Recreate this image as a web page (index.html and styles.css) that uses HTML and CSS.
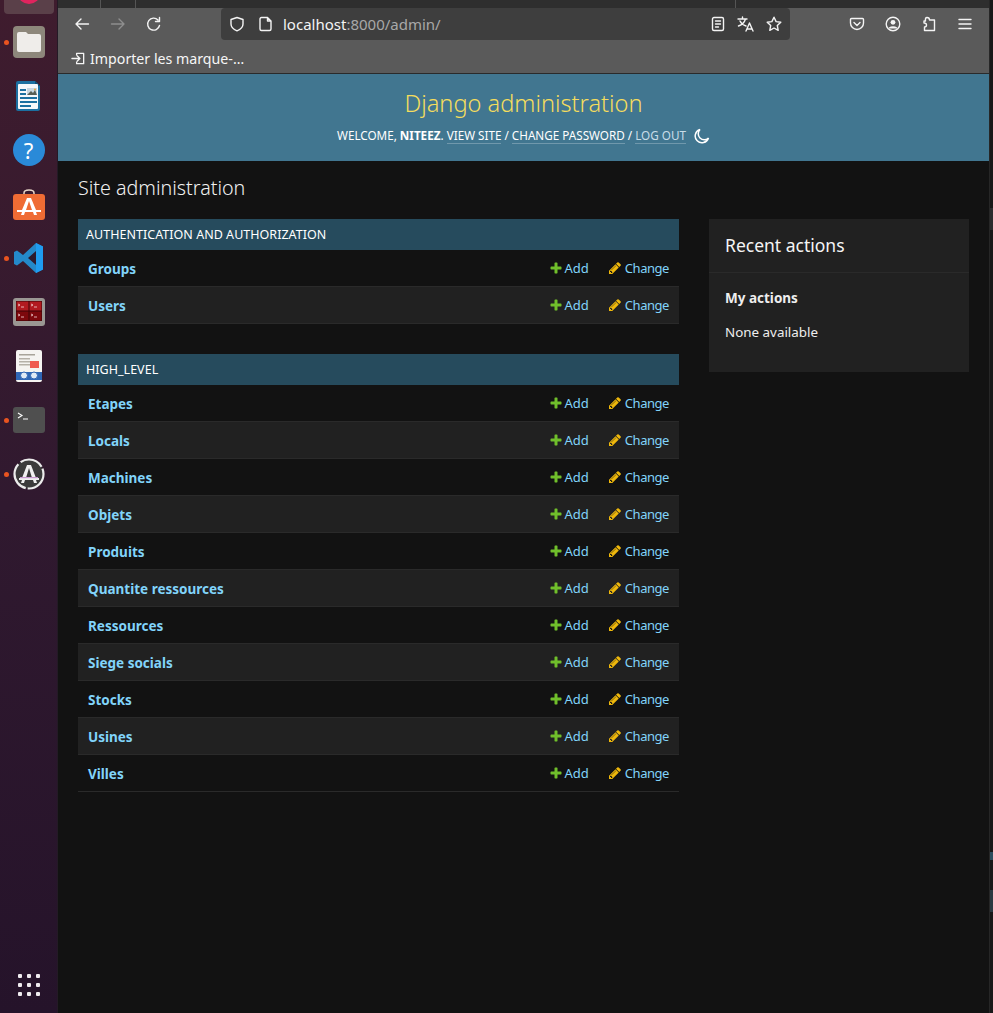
FILE: index.html
```html
<!DOCTYPE html>
<html lang="en">
<head>
<meta charset="utf-8">
<title>Site administration | Django site admin</title>
<link rel="stylesheet" href="styles.css">
</head>
<body>
<svg class="defs" width="0" height="0" aria-hidden="true">
  <symbol id="i-add" viewBox="0 0 1792 1792"><path fill="#70bf2b" d="M1600 796v192q0 40-28 68t-68 28h-416v416q0 40-28 68t-68 28h-192q-40 0-68-28t-28-68v-416h-416q-40 0-68-28t-28-68v-192q0-40 28-68t68-28h416v-416q0-40 28-68t68-28h192q40 0 68 28t28 68v416h416q40 0 68 28t28 68z"/></symbol>
  <symbol id="i-change" viewBox="0 0 1792 1792"><path fill="#efb80b" d="M491 1536l91-91-235-235-91 91v107h128v128h107zm523-928q0-22-22-22-10 0-17 7l-542 542q-7 7-7 17 0 22 22 22 10 0 17-7l542-542q7-7 7-17zm-54-192l416 416-832 832h-416v-416zm683 96q0 53-37 90l-166 166-416-416 166-165q36-38 90-38 53 0 91 38l235 234q37 39 37 91z"/></symbol>
</svg>
<div class="desktop">
  <nav class="dock">
    <div class="dock-active"><span class="dock-pink"></span></div>
    <div class="dock-apps">
      <div class="dock-item running">
        <svg viewBox="0 0 32 32" width="32" height="32"><rect width="32" height="32" rx="4" fill="#8d877b"/><path d="M4 8q0-2 2-2h7l2 2h11q2 0 2 2v14q0 2-2 2H6q-2 0-2-2z" fill="#efedea"/></svg>
      </div>
      <div class="dock-item">
        <svg viewBox="0 0 32 32" width="32" height="32"><path d="M5 1h17l5 5v23q0 2-2 2H5q-2 0-2-2V3q0-2 2-2z" fill="#1b6fa0"/><path d="M22 1l5 5h-5z" fill="#0d4d74"/><rect x="5" y="4" width="20" height="25" rx="1" fill="#f4f7fa"/><rect x="7" y="9" width="6" height="2" fill="#1b6fa0"/><rect x="7" y="13" width="6" height="2" fill="#1b6fa0"/><rect x="7" y="17" width="17" height="2" fill="#1b6fa0"/><rect x="7" y="21" width="17" height="2" fill="#1b6fa0"/><rect x="7" y="25" width="11" height="2" fill="#1b6fa0"/><rect x="14" y="8" width="10" height="7" fill="#c7d6e0"/><path d="M14 15l4-4 2 2 2-3 2 5z" fill="#565d55"/><circle cx="22" cy="9.500" r="1" fill="#e2a33a"/></svg>
      </div>
      <div class="dock-item">
        <span class="dock-help">?</span>
      </div>
      <div class="dock-item">
        <svg viewBox="0 0 32 32" width="32" height="32"><path d="M11 7V5q0-3 5-3t5 3v2" fill="none" stroke="#e8d6c8" stroke-width="1.500"/><rect y="6" width="32" height="26" rx="3" fill="#ef6c34"/><path d="M14 10h4l5 12h5v2h-5l1 3h-3l-1-3h-8l-1 3H8l1-3H4v-2h5zM16 13l-3 9h6z" fill="#fff"/></svg>
      </div>
      <div class="dock-item running">
        <svg viewBox="0 0 32 32" width="32" height="32"><path d="M23 1l7 3.500v23L23 31 10 19l-6 4.500-3-1.500v-12l3-1.500 6 4.500z" fill="#2489ca"/><path d="M23 1l7 3.500v23L23 31z" fill="#1f9cf0"/><path d="M23 9l-8 7 8 7z" fill="#2c1a2e"/></svg>
      </div>
      <div class="dock-item">
        <svg viewBox="0 0 32 28" width="32" height="28"><rect width="32" height="28" rx="3" fill="#9a9793"/><rect x="3" y="3" width="26" height="20" fill="#3a0507"/><rect x="3.500" y="3.500" width="12" height="9" fill="#b21a20"/><rect x="16.500" y="3.500" width="12" height="9" fill="#b21a20"/><rect x="3.500" y="13.500" width="12" height="9" fill="#7d080c"/><rect x="16.500" y="13.500" width="12" height="9" fill="#7d080c"/><path d="M5 6l2 1-2 1M8 9h3M18 6l2 1-2 1M21 9h3M5 16l2 1-2 1M8 19h3M18 16l2 1-2 1M21 19h3" stroke="#f3d6d6" fill="none" stroke-width=".8"/></svg>
      </div>
      <div class="dock-item">
        <svg viewBox="0 0 26 32" width="26" height="32"><rect width="26" height="32" rx="2" fill="#f5f4f1"/><rect x="3" y="4" width="16" height="1.500" fill="#a8a49a"/><rect x="3" y="8" width="11" height="1.500" fill="#b5b1a8"/><rect x="3" y="11" width="11" height="1.500" fill="#b5b1a8"/><rect x="3" y="14" width="11" height="1.500" fill="#b5b1a8"/><rect x="14" y="11" width="9" height="7" fill="#ef5a50"/><rect y="22" width="26" height="8" fill="#2f66b5"/><circle cx="8" cy="25.500" r="3.500" fill="#dfe9f5" stroke="#2f66b5"/><circle cx="18" cy="25.500" r="3.500" fill="#dfe9f5" stroke="#2f66b5"/></svg>
      </div>
      <div class="dock-item running">
        <svg viewBox="0 0 32 26" width="32" height="26"><rect width="32" height="26" rx="3" fill="#4f4f4f"/><path d="M5 6l4 2.500-4 2.500M10 12h5" fill="none" stroke="#fff" stroke-width="1.100"/></svg>
      </div>
      <div class="dock-item running">
        <svg viewBox="0 0 32 32" width="32" height="32"><circle cx="16" cy="16" r="14.500" fill="#3b3b3b" stroke="#ececec" stroke-width="2.200" stroke-dasharray="24 2 30 3"/><path d="M14 7h4l5 13h3v2h-3l1 3h-3l-1-3h-8l-1 3H8l1-3H6v-2h3zM16 10l-3 10h6z" fill="#f0f0f0"/><rect x="7" y="19" width="18" height="1.200" fill="#c89ad0"/></svg>
      </div>
    </div>
    <div class="dock-grid">
      <i></i><i></i><i></i><i></i><i></i><i></i><i></i><i></i><i></i>
    </div>
  </nav>

  <div class="browser">
    <div class="tabstrip"><span class="tab-sep"></span><span class="tab-sep"></span><span class="tab-fill"></span><span class="tab-sep"></span></div>
    <div class="navbar">
      <div class="nav-buttons">
        <svg class="tb" viewBox="0 0 16 16"><path d="M14.500 8H2M7 3L2 8l5 5"/></svg>
        <svg class="tb dim" viewBox="0 0 16 16"><path d="M1.500 8H14M9 3l5 5-5 5"/></svg>
        <svg class="tb" viewBox="0 0 16 16"><path d="M13.500 9.500A6 6 0 1 1 12 4M13.500 1.500V5.500H9.500"/></svg>
      </div>
      <div class="urlbar">
        <svg class="tb" viewBox="0 0 16 16"><path d="M8 1.500l6 2v4.500q0 4.500-6 6.800Q2 12.500 2 8V3.500z"/></svg>
        <svg class="tb page" viewBox="0 0 16 16"><path d="M3.500 1.500h6l3.500 3.500v8q0 1.500-1.500 1.500h-8q-1.500 0-1.500-1.500v-10q0-1.500 1.500-1.500zM9.500 1.500V5h3.500"/></svg>
        <span class="url">localhost<span class="url-dim">:8000/admin/</span></span>
        <span class="url-actions">
          <svg class="tb" viewBox="0 0 16 16"><rect x="2.500" y="1.500" width="11" height="13" rx="1.500"/><path d="M5.500 5h5M5.500 8h5M5.500 11h3"/></svg>
          <svg class="tb tb-wide" viewBox="0 0 18 16"><path d="M1 3h9M5.500 1v2M8.500 3Q7 8 1.500 10M3 5q2 4 6 5M9 15l3.500-8 3.500 8M10 13h5"/></svg>
          <svg class="tb" viewBox="0 0 16 16"><path d="M8 1.200l2.100 4.400 4.700.6-3.500 3.300.9 4.800L8 12l-4.200 2.300.9-4.800L1.200 6.200l4.700-.6z"/></svg>
        </span>
      </div>
      <div class="nav-tools">
        <svg class="tb" viewBox="0 0 16 16"><path d="M2.500 2.500h11q1 0 1 1V7a6.500 6.500 0 0 1-13 0V3.500q0-1 1-1zM5 6.500l3 3 3-3"/></svg>
        <svg class="tb" viewBox="0 0 16 16"><circle cx="8" cy="8" r="6.800"/><circle cx="8" cy="6.300" r="2.400" class="tb-fill"/><path class="tb-fill" d="M3.800 11.500q4.200-2.600 8.400 0v1H3.800z"/></svg>
        <svg class="tb" viewBox="0 0 16 16"><path d="M6 1.500q2.500 0 2.500 2.500h5v10.500H3.500v-3.500Q5.500 11 5.500 9T3 7V5h1.500Q4 1.500 6 1.500z"/></svg>
        <svg class="tb" viewBox="0 0 16 16"><path d="M2 3.500h12M2 8h12M2 12.500h12"/></svg>
      </div>
    </div>
    <div class="bookmarks">
      <svg class="tb import" viewBox="0 0 16 16"><path d="M6 4V2.500h7.500v11H6V12M1 8h8M6.500 5l3 3-3 3"/></svg>
      <span>Importer les marque-…</span>
    </div>

    <header class="site-header">
      <h1 class="branding">Django administration</h1>
      <div class="user-tools">WELCOME, <strong>NITEEZ</strong>. <a class="ul">VIEW SITE</a> / <a class="ul">CHANGE PASSWORD</a> / <a class="ul dim-link">LOG OUT</a><svg class="moon" viewBox="0 0 16 16"><path d="M6 1.500A6.800 6.800 0 1 0 14.500 10 6 6 0 0 1 6 1.500z"/></svg></div>
    </header>

    <main class="content">
      <h1 class="page-title">Site administration</h1>
      <div class="columns">
        <div class="apps">
          <section class="module">
            <h2 class="caption">AUTHENTICATION AND AUTHORIZATION</h2>
            <div class="row"><a class="model">Groups</a><a class="act add"><svg><use href="#i-add"/></svg>Add</a><a class="act change"><svg><use href="#i-change"/></svg>Change</a></div>
            <div class="row alt"><a class="model">Users</a><a class="act add"><svg><use href="#i-add"/></svg>Add</a><a class="act change"><svg><use href="#i-change"/></svg>Change</a></div>
          </section>
          <section class="module">
            <h2 class="caption">HIGH_LEVEL</h2>
            <div class="row"><a class="model">Etapes</a><a class="act add"><svg><use href="#i-add"/></svg>Add</a><a class="act change"><svg><use href="#i-change"/></svg>Change</a></div>
            <div class="row alt"><a class="model">Locals</a><a class="act add"><svg><use href="#i-add"/></svg>Add</a><a class="act change"><svg><use href="#i-change"/></svg>Change</a></div>
            <div class="row"><a class="model">Machines</a><a class="act add"><svg><use href="#i-add"/></svg>Add</a><a class="act change"><svg><use href="#i-change"/></svg>Change</a></div>
            <div class="row alt"><a class="model">Objets</a><a class="act add"><svg><use href="#i-add"/></svg>Add</a><a class="act change"><svg><use href="#i-change"/></svg>Change</a></div>
            <div class="row"><a class="model">Produits</a><a class="act add"><svg><use href="#i-add"/></svg>Add</a><a class="act change"><svg><use href="#i-change"/></svg>Change</a></div>
            <div class="row alt"><a class="model">Quantite ressources</a><a class="act add"><svg><use href="#i-add"/></svg>Add</a><a class="act change"><svg><use href="#i-change"/></svg>Change</a></div>
            <div class="row"><a class="model">Ressources</a><a class="act add"><svg><use href="#i-add"/></svg>Add</a><a class="act change"><svg><use href="#i-change"/></svg>Change</a></div>
            <div class="row alt"><a class="model">Siege socials</a><a class="act add"><svg><use href="#i-add"/></svg>Add</a><a class="act change"><svg><use href="#i-change"/></svg>Change</a></div>
            <div class="row"><a class="model">Stocks</a><a class="act add"><svg><use href="#i-add"/></svg>Add</a><a class="act change"><svg><use href="#i-change"/></svg>Change</a></div>
            <div class="row alt"><a class="model">Usines</a><a class="act add"><svg><use href="#i-add"/></svg>Add</a><a class="act change"><svg><use href="#i-change"/></svg>Change</a></div>
            <div class="row"><a class="model">Villes</a><a class="act add"><svg><use href="#i-add"/></svg>Add</a><a class="act change"><svg><use href="#i-change"/></svg>Change</a></div>
          </section>
        </div>
        <aside class="recent">
          <h2 class="recent-title">Recent actions</h2>
          <div class="recent-body">
            <h3 class="recent-sub">My actions</h3>
            <p class="recent-none">None available</p>
          </div>
        </aside>
      </div>
    </main>
  </div>
  <div class="edge">
    <span class="edge-block"></span>
    <span class="edge-mark"></span>
    <span class="edge-box"></span>
  </div>
</div>
</body>
</html>
```

FILE: styles.css
```css
* { box-sizing: border-box; }
html, body { margin: 0; padding: 0; height: 100%; background: #121212; }
body { font-family: "Noto Sans", "Open Sans", sans-serif; overflow: hidden; }
.defs { position: absolute; }
h1, h2, h3, p { margin: 0; font-weight: normal; }
a { text-decoration: none; }

.desktop { display: flex; width: 993px; height: 1013px; overflow: hidden; }

/* Dock */
.dock {
  width: 58px; flex: none; display: flex; flex-direction: column; align-items: center;
  background: linear-gradient(180deg, #3f1c2e 0%, #30192f 50%, #25132a 100%);
  border-right: 1px solid #241a26;
}
.dock-active { width: 50px; height: 14px; margin-left: 1px; background: #5a4049; border-radius: 0 0 4px 4px; display: flex; justify-content: center; overflow: hidden; }
.dock-pink { width: 22px; height: 20px; margin-top: -16px; border-radius: 50%; background: #e0245e; }
.dock-apps { display: flex; flex-direction: column; margin-top: 1px; }
.dock-item { height: 54px; width: 58px; display: flex; align-items: center; justify-content: center; position: relative; }
.dock-item svg { display: block; }
.running::before { content: ""; position: absolute; left: 4px; top: 25px; width: 5px; height: 5px; border-radius: 50%; background: #e95420; }
.dock-help { width: 32px; height: 32px; border-radius: 50%; background: #2a8ad8; color: #fff; font-size: 22px; line-height: 32px; text-align: center; }
.dock-grid { margin-top: auto; margin-bottom: 17px; display: grid; grid-template-columns: repeat(3, 4px); gap: 5px; }
.dock-grid i { width: 4px; height: 4px; background: #f0ecf0; border-radius: 1px; }

/* Browser chrome */
.browser { flex: 1; min-width: 0; display: flex; flex-direction: column; background: #121212; }
.tabstrip { height: 8px; background: #2e2e2e; display: flex; padding-left: 42px; gap: 34px; flex: none; }
.tab-sep { width: 1px; background: #555; }
.tab-fill { width: 531px; }
.navbar { height: 32px; background: #5a5a5a; display: flex; align-items: center; flex: none; }
.tb { width: 16px; height: 16px; fill: none; stroke: #f4f4f4; stroke-width: 1.400; stroke-linecap: round; stroke-linejoin: round; flex: none; }
.tb.dim { stroke: #8e8e8e; }
.tb-wide { width: 18px; }
.tb-fill { fill: #f4f4f4; stroke: none; }
.nav-buttons { width: 163px; display: flex; gap: 20px; padding-left: 16px; }
.urlbar { width: 569px; height: 32px; background: #3e3e3e; border-radius: 4px; display: flex; align-items: center; padding: 0 8px; color: #f4f4f4; }
.urlbar .page { margin-left: 13px; }
.url { margin-left: 9px; font-size: 15px; }
.url-dim { color: #a8a8a8; }
.url-actions { margin-left: auto; display: flex; gap: 11px; }
.nav-tools { display: flex; gap: 20px; padding-left: 59px; }
.bookmarks { height: 34px; background: #5a5a5a; border-bottom: 1px solid #2a2a2a; display: flex; align-items: center; gap: 4px; padding: 3px 0 0 13px; color: #f6f6f6; font-size: 14.200px; flex: none; }
.import { width: 15px; height: 15px; }

/* Django header */
.site-header { height: 87px; background: #417690; text-align: center; flex: none; padding-top: 13px; }
.branding { font-size: 23.600px; line-height: 32px; color: #f5dd5d; font-weight: 300; }
.user-tools { margin-top: 8px; font-size: 11.700px; line-height: 17px; color: #fff; white-space: pre; }
.user-tools strong { font-weight: 700; }
.ul { color: #fff; border-bottom: 1px solid rgba(255,255,255,.25); }
.dim-link { color: #c8dde8; }
.moon { width: 16px; height: 16px; margin-left: 8px; vertical-align: -4px; fill: none; stroke: #fff; stroke-width: 1.500; }

/* Content */
.content { flex: 1; padding: 14px 20px 0; background: #121212; color: #eee; }
.page-title { font-size: 19.700px; line-height: 26px; color: #f0f0f0; font-weight: 300; }
.columns { display: flex; gap: 30px; margin-top: 18px; }
.apps { width: 601px; flex: none; display: flex; flex-direction: column; gap: 30px; }
.caption { height: 31px; background: #264b5d; color: #fff; font-size: 12.500px; line-height: 31px; padding-left: 8px; letter-spacing: .03px; }
.row { height: 37px; display: flex; align-items: center; padding: 0 10px; border-bottom: 1px solid #2a2a2a; font-size: 13px; }
.row.alt { background: #212121; }
.model { color: #81d4fa; font-weight: 700; font-size: 13.500px; margin-right: auto; padding-top: 2px; }
.act { color: #81d4fa; display: flex; align-items: center; gap: 3px; }
.act svg { width: 14px; height: 14px; flex: none; }
.add { gap: 1px; }
.change { margin-left: 19px; letter-spacing: -.45px; }

/* Recent actions */
.recent { width: 260px; height: 153px; background: #212121; flex: none; }
.recent-title { height: 54px; padding: 0 16px; font-size: 17.500px; line-height: 53px; color: #f5f5f5; border-bottom: 1px solid #2a2a2a; }
.recent-body { padding: 15px 16px 0; font-size: 13.400px; }
.recent-sub { font-size: 13.500px; font-weight: 700; line-height: 20px; color: #eee; }
.recent-none { margin-top: 14px; line-height: 20px; color: #eee; }

/* Sliver of the window behind */
.edge { width: 4px; flex: none; background: #181818; border-left: 1px solid #262626; display: flex; flex-direction: column; }
.edge-block { height: 22px; margin-top: 208px; background: #2c2c2e; }
.edge-mark { height: 8px; margin-top: 622px; background: #2b4d5e; }
.edge-box { height: 22px; margin-top: 30px; background: #2a3a42; }
```
